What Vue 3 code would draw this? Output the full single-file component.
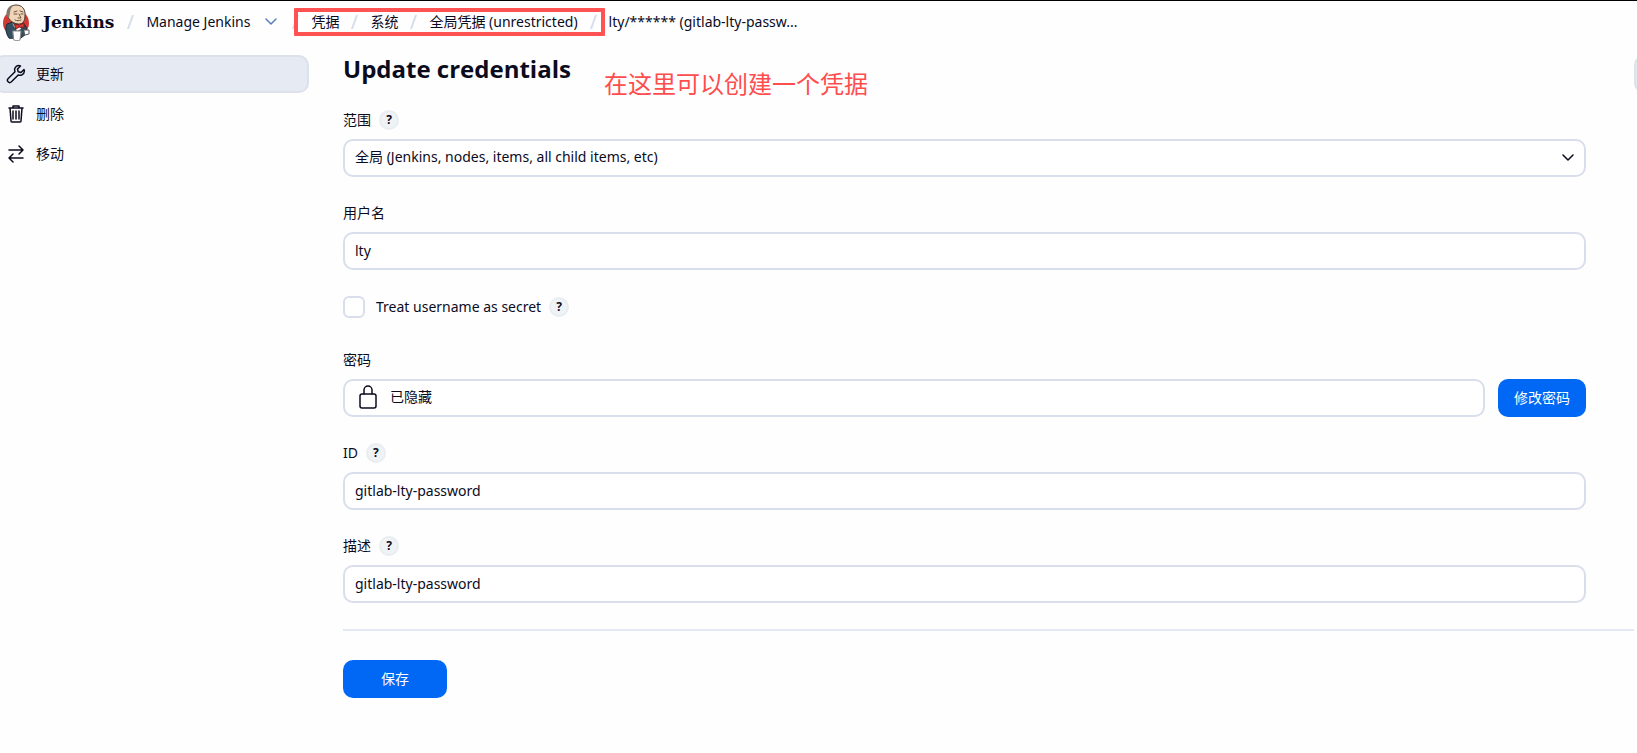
<template>
  <div class="page">
    <header class="page-header">
      <a class="brand" href="#">
        <svg class="brand-logo" viewBox="0 0 28 37" aria-hidden="true">
          <ellipse cx="14" cy="19" rx="13" ry="13" fill="#d33833" />
          <path d="M7 34C4 30 3 24 5 20l6-2 7 1 5 2c2 3 2 6 1 9l-5 4z" fill="#335061" stroke="#1d2b35" />
          <path d="M6 13C4 5 9 1 14 1c6 0 9 4 9 9 0 6-1 9-5 10-4 0-9-1-12-7z" fill="#f0d6b7" stroke="#4a3f38" />
          <path d="M5 13C3 6 7 1 12 1 9 3 8 6 8 9l-1 5z" fill="#81766e" />
          <path d="M12 8l3-1M18 7l3 1M12 10h3M19 10h2M17 10l2 4h-3M13 16c2 1 4 1 6 0" fill="none" stroke="#6b5444" />
          <path d="M10 19l4 4 4-3 1 5-4 2z" fill="#f7f4ed" />
          <path d="M13 20l4 1 5-2v5l-5-1-3 2z" fill="#d33833" stroke="#821a1a" />
          <path d="M11 27h8l-1 9c-2 1-4 1-6 0z" fill="#fff" stroke="#888" />
          <path d="M22 26h5v4l-4 1z" fill="#fff" stroke="#555" />
        </svg>
        <span class="brand-name">Jenkins</span>
      </a>
      <nav class="breadcrumbs" aria-label="breadcrumb">
        <svg class="slash" viewBox="0 0 7 14"><path d="M6 0L1 14" /></svg>
        <a class="crumb" href="#">Manage Jenkins</a>
        <button class="crumb-menu" type="button" aria-label="Manage Jenkins">
          <svg viewBox="0 0 12 8"><path d="M1 1l5 5 5-5" /></svg>
        </button>
        <div class="marked">
          <template v-for="item in crumbs" :key="item">
            <svg class="slash" viewBox="0 0 7 14"><path d="M6 0L1 14" /></svg>
            <a class="crumb" href="#">{{ item }}</a>
          </template>
          <svg class="slash" viewBox="0 0 7 14"><path d="M6 0L1 14" /></svg>
        </div>
        <span class="crumb">lty/****** (gitlab-lty-passw...</span>
      </nav>
    </header>

    <div class="page-body">
      <aside class="side-panel">
        <a class="task active" href="#">
          <svg viewBox="0 0 20 20">
            <path d="M18 5.500l-3 3-2.800-.7-.7-2.800 3-3C12.300 1.200 10 2 9 4c-.6 1.300-.5 2.500 0 3.800L2 14.800c-1.800 2 1 5 3.200 3.200l7-7c1.300.5 2.600.5 3.800-.2 1.900-1.100 2.700-3.300 2-5.300z" />
          </svg>
          更新
        </a>
        <a class="task" href="#">
          <svg viewBox="0 0 20 20">
            <path d="M3 4h14M7 4V2h6v2M4 4l1 13c0 1 1 1 1 1h8c1 0 1-1 1-1l1-13M7 7v8M10 7v8M13 7v8" />
          </svg>
          删除
        </a>
        <a class="task" href="#">
          <svg viewBox="0 0 20 20">
            <path d="M3 6h14M13 2l4 4-4 4M17 14H3M7 10l-4 4 4 4" />
          </svg>
          移动
        </a>
      </aside>

      <main class="main-panel">
        <div class="title-row">
          <h1>Update credentials</h1>
          <span class="note">在这里可以创建一个凭据</span>
          <button class="edge-button" type="button" aria-label="more"></button>
        </div>

        <form @submit.prevent>
          <div class="fields">
            <div class="field">
              <div class="field-label">
                <label for="scope">范围</label>
                <button class="help" type="button">?</button>
              </div>
              <div class="select-wrap">
                <select id="scope" v-model="scope" class="control">
                  <option value="global">全局 (Jenkins, nodes, items, all child items, etc)</option>
                </select>
                <svg viewBox="0 0 12 8"><path d="M1 1l5 5 5-5" /></svg>
              </div>
            </div>

            <div class="field">
              <div class="field-label">
                <label for="username">用户名</label>
              </div>
              <input id="username" v-model="username" class="control" type="text" />
            </div>

            <div class="check-row">
              <input id="secret" v-model="secret" type="checkbox" />
              <label for="secret">Treat username as secret</label>
              <button class="help" type="button">?</button>
            </div>

            <div class="field">
              <div class="field-label">
                <span>密码</span>
              </div>
              <div class="password-row">
                <div class="control concealed">
                  <svg viewBox="0 0 18 24">
                    <rect x="1" y="9" width="16" height="14" rx="2" />
                    <path d="M5 9V5a4 4 0 0 1 8 0V9" />
                  </svg>
                  <span>已隐藏</span>
                </div>
                <button class="primary" type="button">修改密码</button>
              </div>
            </div>

            <div class="field">
              <div class="field-label">
                <label for="cred-id">ID</label>
                <button class="help" type="button">?</button>
              </div>
              <input id="cred-id" v-model="credentialId" class="control" type="text" />
            </div>

            <div class="field">
              <div class="field-label">
                <label for="description">描述</label>
                <button class="help" type="button">?</button>
              </div>
              <input id="description" v-model="description" class="control" type="text" />
            </div>
          </div>

          <div class="form-footer">
            <button class="primary save" type="submit">保存</button>
          </div>
        </form>
      </main>
    </div>
  </div>
</template>

<script setup>
import { ref } from 'vue'

const crumbs = ['凭据', '系统', '全局凭据 (unrestricted)']

const scope = ref('global')
const username = ref('lty')
const secret = ref(false)
const credentialId = ref('gitlab-lty-password')
const description = ref('gitlab-lty-password')
</script>

<style>
body {
  margin: 0;
  background: #fefefe;
}
</style>

<style scoped>
.page {
  border-top: 1px solid #000;
  overflow-x: hidden;
  min-height: 100vh;
  box-sizing: border-box;
  font-family: 'Noto Sans', 'Noto Sans CJK SC', sans-serif;
  font-size: 14px;
  line-height: 20px;
  color: #0b0b1e;
}

a {
  color: inherit;
  text-decoration: none;
}

button,
input,
select {
  font: inherit;
  color: inherit;
  margin: 0;
}

svg {
  flex: none;
  fill: none;
  stroke: currentColor;
  stroke-linecap: round;
  stroke-linejoin: round;
}

.page-header {
  display: flex;
  align-items: center;
  height: 42px;
  padding-left: 2px;
}

.brand {
  display: flex;
  align-items: center;
  gap: 13px;
}

.brand-logo {
  width: 28px;
  height: 37px;
  stroke: none;
}

.brand-name {
  font-family: 'DejaVu Serif', serif;
  font-size: 17px;
  font-weight: 700;
}

.breadcrumbs {
  display: flex;
  align-items: center;
  gap: 12px;
  margin-left: 13px;
  white-space: nowrap;
}

.slash {
  width: 7px;
  height: 14px;
  color: #d5deea;
  stroke-width: 2;
}

.crumb-menu {
  display: flex;
  padding: 0 3px;
  border: 0;
  background: none;
  color: #5580b8;
}

.crumb-menu svg {
  width: 12px;
  height: 8px;
  stroke-width: 1.5;
}

.marked {
  position: relative;
  display: flex;
  align-items: center;
  gap: 12px;
}

.marked::after {
  content: '';
  position: absolute;
  inset: -4px -8px -4px 2px;
  border: 4px solid #ff5252;
  border-radius: 1px;
  pointer-events: none;
}

.page-body {
  display: flex;
  gap: 34px;
  padding-top: 12px;
}

.side-panel {
  flex: 0 0 309px;
  display: flex;
  flex-direction: column;
  gap: 2px;
}

.task {
  display: flex;
  align-items: center;
  gap: 10px;
  height: 38px;
  box-sizing: border-box;
  margin-left: -6px;
  padding-left: 10px;
  border: 2px solid transparent;
  border-radius: 10px;
}

.task.active {
  background: #e6eaf2;
  border-color: #dde2ea;
}

.task svg {
  width: 20px;
  height: 20px;
  stroke-width: 1.5;
}

.main-panel {
  flex: 1;
  min-width: 0;
}

.title-row {
  position: relative;
  height: 38px;
  margin-bottom: 17px;
}

h1 {
  margin: 0;
  font-family: 'Open Sans', sans-serif;
  font-size: 24px;
  font-weight: 700;
  line-height: 28px;
}

.note {
  position: absolute;
  left: 261px;
  top: 10px;
  font-family: 'Noto Sans CJK SC', sans-serif;
  font-size: 24px;
  line-height: 36px;
  color: #ff4d4d;
}

.edge-button {
  position: absolute;
  top: 0;
  right: -35px;
  width: 38px;
  height: 38px;
  border: 2px solid #dde2ea;
  border-radius: 10px;
  background: #e6eaf2;
}

.fields {
  display: flex;
  flex-direction: column;
  gap: 26px;
  margin-right: 51px;
}

.field {
  display: flex;
  flex-direction: column;
  gap: 9px;
}

.field-label {
  display: flex;
  align-items: center;
  gap: 8px;
  height: 20px;
}

.help {
  width: 20px;
  height: 20px;
  padding: 0;
  border: 2px solid #e9edf1;
  border-radius: 50%;
  background: #f0f3f6;
  font-size: 12px;
  font-weight: 700;
  line-height: 16px;
  text-align: center;
}

.control {
  width: 100%;
  height: 38px;
  box-sizing: border-box;
  padding: 0 10px 2px;
  border: 2px solid #d8deeb;
  border-radius: 10px;
  background: #fff;
  appearance: none;
}

.select-wrap {
  position: relative;
  display: flex;
}

.select-wrap svg {
  position: absolute;
  right: 12px;
  top: 15px;
  width: 12px;
  height: 8px;
  stroke-width: 1.5;
  pointer-events: none;
}

.check-row {
  display: flex;
  align-items: center;
  height: 22px;
  margin-bottom: 6px;
}

.check-row input {
  width: 22px;
  height: 22px;
  margin-right: 11px;
  border: 2px solid #d8deeb;
  border-radius: 6px;
  background: #fff;
  appearance: none;
}

.check-row input:checked {
  background: #0068f5;
}

.check-row label {
  margin-right: 8px;
}

.password-row {
  display: flex;
  gap: 13px;
}

.concealed {
  flex: 1;
  display: flex;
  align-items: center;
  gap: 13px;
  padding-left: 14px;
}

.concealed svg {
  width: 18px;
  height: 24px;
  stroke-width: 1.5;
}

.primary {
  height: 38px;
  padding: 0 16px;
  border: 0;
  border-radius: 10px;
  background: #0068f5;
  color: #fff;
  white-space: nowrap;
}

.save {
  padding: 0 38px;
}

.form-footer {
  margin: 26px 3px 0 0;
  padding-top: 29px;
  border-top: 2px solid #e3e8f3;
}
</style>
